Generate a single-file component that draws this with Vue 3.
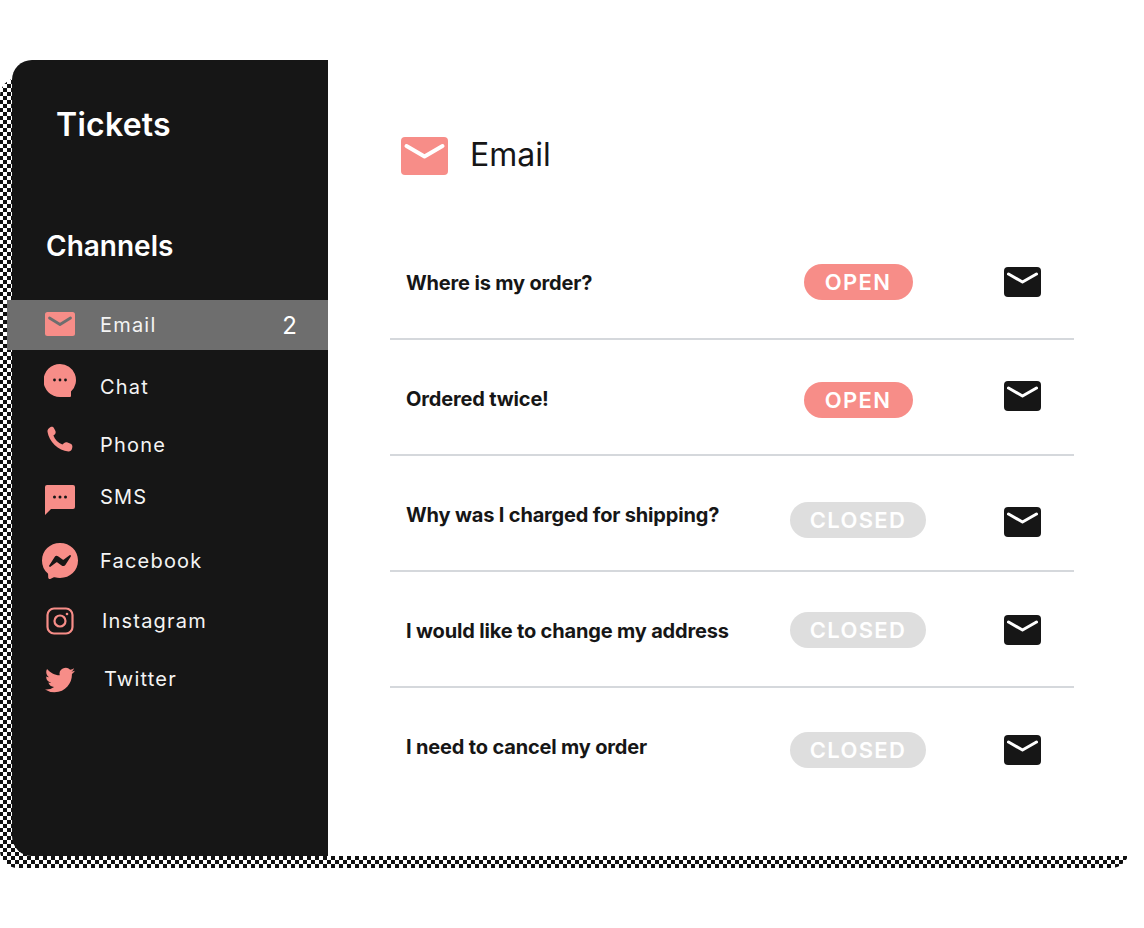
<template>
  <div class="page">
    <div class="checker"></div>
    <div class="card">
      <aside class="sidebar">
        <h1 class="brand">Tickets</h1>
        <h2 class="channels-title">Channels</h2>
        <ul class="channels">
          <li
            v-for="c in channels"
            :key="c.name"
            class="channel"
            :class="{ active: c.count }"
            :style="{ marginTop: c.gap + 'px' }"
          >
            <span class="channel-icon" :style="{ marginTop: c.iconShift * 2 + 'px' }">
              <svg v-if="c.icon === 'email'" width="30" height="24" viewBox="0 0 30 24">
                <rect width="30" height="24" rx="2.5" fill="#f78d88" />
                <path d="M4.500 6l10.500 6.500L25.500 6" fill="none" stroke="#6e6e6e" stroke-width="2.800" stroke-linecap="round" stroke-linejoin="round" />
              </svg>
              <svg v-else-if="c.icon === 'chat'" width="32" height="33" viewBox="0 0 32 33">
                <path d="M16 0a16 16 0 0 1 11 27.6V32a1 1 0 0 1-1 1H16A16.5 16.5 0 0 1 16 0z" fill="#f78d88" />
                <circle cx="10.5" cy="16" r="1.4" fill="#161616" />
                <circle cx="16" cy="16" r="1.4" fill="#161616" />
                <circle cx="21.5" cy="16" r="1.4" fill="#161616" />
              </svg>
              <svg v-else-if="c.icon === 'phone'" width="28" height="28" viewBox="0 0 28 28">
                <path d="M4.6 1c1.200-.6 2.700-.2 3.300 1l1.400 2.700c.7 1.300.4 2.800-.6 3.800l-1.300 1c1.600 4.200 4.700 7.300 9 8.900l1.500-1.100c1-.9 2.400-1.200 3.700-.7l3 1.200c1.400.5 2.100 2.100 1.700 3.600l-.4 1.600c-.4 1.500-1.900 2.500-3.500 2.400C12.400 24.900 2.800 15.500 1.500 5.800 1.200 3.700 2.600 2 4.600 1z" fill="#f78d88" />
              </svg>
              <svg v-else-if="c.icon === 'sms'" width="30" height="30" viewBox="0 0 30 30">
                <path d="M2 0h26a2 2 0 0 1 2 2v20a2 2 0 0 1-2 2H6l-6 6V2a2 2 0 0 1 2-2z" fill="#f78d88" />
                <circle cx="9.500" cy="12" r="1.500" fill="#161616" />
                <circle cx="15" cy="12" r="1.500" fill="#161616" />
                <circle cx="20.500" cy="12" r="1.500" fill="#161616" />
              </svg>
              <svg v-else-if="c.icon === 'facebook'" width="36" height="36" viewBox="0 0 24 24">
                <path fill-rule="evenodd" d="M.001 11.639C.001 4.949 5.241 0 12.001 0S24 4.95 24 11.639c0 6.689-5.24 11.638-11.999 11.638c-1.21 0-2.38-.16-3.47-.46a.96.96 0 0 0-.64.05l-2.39 1.05a.96.96 0 0 1-1.35-.85l-.07-2.14a.97.97 0 0 0-.32-.68A11.39 11.389 0 0 1 .002 11.64zm8.32-2.19l-3.52 5.6c-.35.53.32 1.139.82.75l3.79-2.87c.26-.2.6-.2.87 0l2.8 2.1c.84.63 2.04.4 2.6-.48l3.52-5.6c.35-.53-.32-1.13-.82-.75l-3.79 2.87c-.25.2-.6.2-.86 0l-2.8-2.1a1.800 1.800 0 0 0-2.61.48z" fill="#f78d88" />
              </svg>
              <svg v-else-if="c.icon === 'instagram'" width="28" height="28" viewBox="0 0 28 28" fill="none" stroke="#f78d88" stroke-width="2.200">
                <rect x="1.500" y="1.500" width="25" height="25" rx="6.500" />
                <circle cx="14" cy="14" r="5.500" />
                <circle cx="21" cy="7" r="1.300" fill="#f78d88" stroke="none" />
              </svg>
              <svg v-else width="30" height="30" viewBox="0 0 24 24">
                <path d="M23.953 4.57a10 10 0 0 1-2.825.775 4.958 4.958 0 0 0 2.163-2.723c-.951.555-2.005.959-3.127 1.184a4.92 4.92 0 0 0-8.384 4.482C7.690 8.095 4.067 6.130 1.640 3.162a4.822 4.822 0 0 0-.666 2.475c0 1.710.870 3.213 2.188 4.096a4.904 4.904 0 0 1-2.228-.616v.060a4.923 4.923 0 0 0 3.946 4.827 4.996 4.996 0 0 1-2.212.085 4.936 4.936 0 0 0 4.604 3.417 9.867 9.867 0 0 1-6.102 2.105c-.390 0-.779-.023-1.170-.067a13.995 13.995 0 0 0 7.557 2.209c9.053 0 13.998-7.496 13.998-13.985 0-.210 0-.420-.015-.630A9.935 9.935 0 0 0 24 4.590z" fill="#f78d88" />
              </svg>
            </span>
            <span class="channel-name" :style="{ marginLeft: c.textGap + 'px' }">{{ c.name }}</span>
            <span v-if="c.count" class="channel-count">{{ c.count }}</span>
          </li>
        </ul>
      </aside>

      <main class="content">
        <header class="content-head">
          <svg width="47" height="38" viewBox="0 0 47 38">
            <rect width="47" height="38" rx="4" fill="#f78d88" />
            <path d="M5.500 9l18 10.500L41.500 9" fill="none" stroke="#fff" stroke-width="4" stroke-linecap="round" stroke-linejoin="round" />
          </svg>
          <span class="content-title">Email</span>
        </header>

        <div
          v-for="t in tickets"
          :key="t.title"
          class="ticket"
        >
          <span class="ticket-title">{{ t.title }}</span>
          <span
            class="pill"
            :class="t.status === 'OPEN' ? 'open' : 'closed'"
            :style="{ marginTop: t.pillShift * 2 + 'px' }"
          >{{ t.status }}</span>
          <svg
            class="ticket-icon"
            :style="{ marginTop: t.iconShift * 2 + 'px' }"
            width="37"
            height="30"
            viewBox="0 0 37 30"
          >
            <rect width="37" height="30" rx="4" fill="#161616" />
            <path d="M4.500 7l14 8 14-8" fill="none" stroke="#fff" stroke-width="3" stroke-linecap="round" stroke-linejoin="round" />
          </svg>
        </div>
      </main>
    </div>
  </div>
</template>

<script setup>
const channels = [
  { name: 'Email', icon: 'email', gap: 0, iconShift: -1, textGap: 22, count: 2 },
  { name: 'Chat', icon: 'chat', gap: 12, iconShift: -7, textGap: 22 },
  { name: 'Phone', icon: 'phone', gap: 8, iconShift: -5, textGap: 22 },
  { name: 'SMS', icon: 'sms', gap: 2, iconShift: 2.5, textGap: 22 },
  { name: 'Facebook', icon: 'facebook', gap: 14, iconShift: 0, textGap: 22 },
  { name: 'Instagram', icon: 'instagram', gap: 10, iconShift: 0, textGap: 24 },
  { name: 'Twitter', icon: 'twitter', gap: 8, iconShift: 1, textGap: 26 }
]

const tickets = [
  { title: 'Where is my order?', status: 'OPEN', pillShift: 1, iconShift: 1 },
  { title: 'Ordered twice!', status: 'OPEN', pillShift: 3, iconShift: -1 },
  { title: 'Why was I charged for shipping?', status: 'CLOSED', pillShift: 7, iconShift: 9 },
  { title: 'I would like to change my address', status: 'CLOSED', pillShift: 1, iconShift: 1 },
  { title: 'I need to cancel my order', status: 'CLOSED', pillShift: 5, iconShift: 5 }
]
</script>

<style>
html, body { background: #fff; }
</style>

<style scoped>
.page {
  position: relative;
  width: 1144px;
  height: 928px;
  padding: 60px 0 0 12px;
  box-sizing: border-box;
  overflow: hidden;
  font-family: Inter, "Liberation Sans", sans-serif;
}
.checker {
  position: absolute;
  left: 0;
  top: 78px;
  width: 1129px;
  height: 790px;
  border-radius: 18px;
  background: repeating-conic-gradient(#111 0 25%, #fff 0 50%) -1px 2px / 8px 8px;
}
.card {
  position: relative;
  display: flex;
  width: 1118px;
  height: 796px;
}

.sidebar {
  width: 316px;
  flex: none;
  background: #161616;
  border-radius: 20px 0 0 20px;
  color: #fff;
}
.brand {
  margin: 45px 0 0 44px;
  font-size: 32px;
  line-height: 40px;
  font-weight: 600;
  letter-spacing: 0.25px;
}
.channels-title {
  margin: 83px 0 0 34px;
  font-size: 28px;
  line-height: 36px;
  font-weight: 600;
}
.channels {
  list-style: none;
  margin: 36px 0 0;
  padding: 0;
}
.channel {
  display: flex;
  align-items: center;
  height: 50px;
  padding-left: 30px;
}
.channel.active {
  background: #6e6e6e;
  margin-left: -5px;
  padding-left: 35px;
}
.channel-icon {
  display: flex;
  align-items: center;
  justify-content: center;
  width: 36px;
  flex: none;
}
.channel-name {
  font-size: 20px;
  letter-spacing: 1.200px;
  color: #f4f4f4;
}
.channel-count {
  margin-left: auto;
  margin-right: 31px;
  font-size: 24px;
}

.content {
  flex: 1;
  background: #fff;
  padding-left: 62px;
  color: #161616;
}
.content-head {
  display: flex;
  align-items: center;
  gap: 22px;
  height: 38px;
  margin-top: 77px;
  margin-bottom: 49px;
  padding-left: 11px;
}
.content-title {
  padding-bottom: 4px;
  font-size: 32px;
}
.ticket {
  display: grid;
  grid-template-columns: 384px 136px 115px;
  align-items: center;
  justify-items: center;
  box-sizing: border-box;
  width: 684px;
  height: 116px;
  padding-left: 16px;
  border-bottom: 2px solid #d5d8dc;
}
.ticket:last-child {
  border-bottom-color: transparent;
}
.ticket-title {
  justify-self: start;
  padding-top: 4px;
  font-size: 20px;
  font-weight: 700;
  letter-spacing: -0.17px;
}
.ticket-icon {
  justify-self: end;
}
.pill {
  box-sizing: border-box;
  height: 36px;
  line-height: 36px;
  border-radius: 18px;
  text-align: center;
  color: #fff;
  font-size: 22px;
  font-weight: 600;
  letter-spacing: 1.300px;
}
.pill.open {
  width: 109px;
  background: #f78d88;
}
.pill.closed {
  width: 136px;
  background: #dedede;
}
</style>
